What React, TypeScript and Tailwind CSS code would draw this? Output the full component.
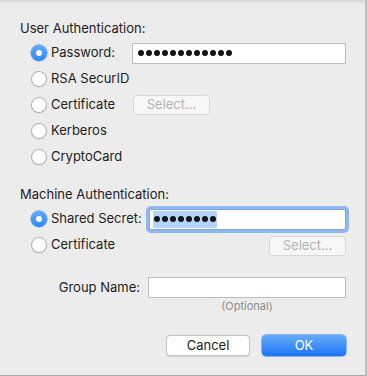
import React from "react";

function Radio({ checked }: { checked?: boolean }) {
  return checked ? (
    <span className="flex h-4 w-4 shrink-0 items-center justify-center rounded-full bg-[linear-gradient(#5faafb,#2f88f5)] shadow-[0_0_0_0.5px_#2a7be0]">
      <span className="h-[6px] w-[6px] rounded-full bg-white" />
    </span>
  ) : (
    <span className="h-4 w-4 shrink-0 rounded-full border border-[#b2b2b2] bg-white shadow-[0_0.5px_1px_rgba(0,0,0,0.12)]" />
  );
}

function Dots({ n }: { n: number }) {
  return (
    <span className="flex items-center gap-[2px]">
      {Array.from({ length: n }).map((_, i) => (
        <span key={i} className="h-[6px] w-[6px] rounded-full bg-[#111]" />
      ))}
    </span>
  );
}

function SelectBtn() {
  return (
    <button className="flex h-[20px] w-[77px] items-center justify-center rounded-[4px] border border-[#d8d8d8] bg-[#f7f7f7] text-[13px] text-[#b4b4b4]">
      Select…
    </button>
  );
}

export default function App() {
  return (
    <div className="flex h-[376px] w-[368px] bg-[#d8d8d8] font-['Inter',sans-serif] text-[13px] text-[#1d1d1d]">
      {/* panel */}
      <div className="flex h-[376px] w-[367px] flex-col border-r-2 border-b border-r-[#bcbcbc] border-b-[#a6a6a6] bg-[linear-gradient(to_bottom,#d6d6d6_0px,#ececec_4px)] pr-[19px]">
        {/* user auth */}
        <div className="mt-[20px] pl-[20px] leading-4">User Authentication:</div>
        <div className="mt-[4px] flex flex-col pl-[31px]">
          <div className="flex h-[26px] items-center">
            <div className="flex w-[101px] items-center gap-[4px]">
              <Radio checked />
              <span>Password:</span>
            </div>
            <div className="flex h-[21px] flex-1 items-center border border-[#bdbdbd] bg-white pl-[5px]">
              <Dots n={12} />
            </div>
          </div>
          <div className="flex h-[26px] items-center gap-[4px]">
            <Radio />
            <span>RSA SecurID</span>
          </div>
          <div className="flex h-[26px] items-center">
            <div className="flex w-[102px] items-center gap-[4px]">
              <Radio />
              <span>Certificate</span>
            </div>
            <SelectBtn />
          </div>
          <div className="flex h-[26px] items-center gap-[4px]">
            <Radio />
            <span>Kerberos</span>
          </div>
          <div className="flex h-[26px] items-center gap-[4px]">
            <Radio />
            <span>CryptoCard</span>
          </div>
        </div>

        {/* machine auth */}
        <div className="mt-[16px] pl-[20px] leading-4">Machine Authentication:</div>
        <div className="mt-[4px] flex flex-col pl-[31px]">
          <div className="flex h-[26px] items-center">
            <div className="flex w-[118px] items-center gap-[4px]">
              <Radio checked />
              <span>Shared Secret:</span>
            </div>
            <div className="flex h-[21px] flex-1 items-center rounded-[2px] border border-[#7ea8e3] bg-white pl-[3px] shadow-[0_0_0_3px_#8fb8f0]">
              <span className="flex h-[17px] items-center bg-[#b3d5fd] px-[1px]">
                <Dots n={8} />
              </span>
            </div>
          </div>
          <div className="flex h-[26px] items-center">
            <div className="flex items-center gap-[4px]">
              <Radio />
              <span>Certificate</span>
            </div>
            <div className="ml-auto pt-[2px]">
              <SelectBtn />
            </div>
          </div>
        </div>

        {/* group name */}
        <div className="mt-[19px] flex h-[21px] items-center justify-end gap-[8px]">
          <span>Group Name:</span>
          <div className="h-[21px] w-[198px] border border-[#bdbdbd] bg-white" />
        </div>
        <div className="mt-[2px] w-[198px] self-end text-center text-[11px] leading-[13px] text-[#8c8c8c]">
          (Optional)
        </div>

        {/* buttons */}
        <div className="mt-[22px] flex justify-end gap-[12px]">
          <button className="flex h-[21px] w-[84px] items-center justify-center rounded-[4px] border border-[#c4c4c4] bg-white text-[13px] text-[#1d1d1d] shadow-[0_0.5px_1px_rgba(0,0,0,0.12)]">
            Cancel
          </button>
          <button className="flex h-[21px] w-[84px] items-center justify-center rounded-[4px] bg-[linear-gradient(#66acfb,#1b74f6)] text-[13px] text-white shadow-[0_0_0_0.5px_#2a78e6]">
            OK
          </button>
        </div>
      </div>
    </div>
  );
}
